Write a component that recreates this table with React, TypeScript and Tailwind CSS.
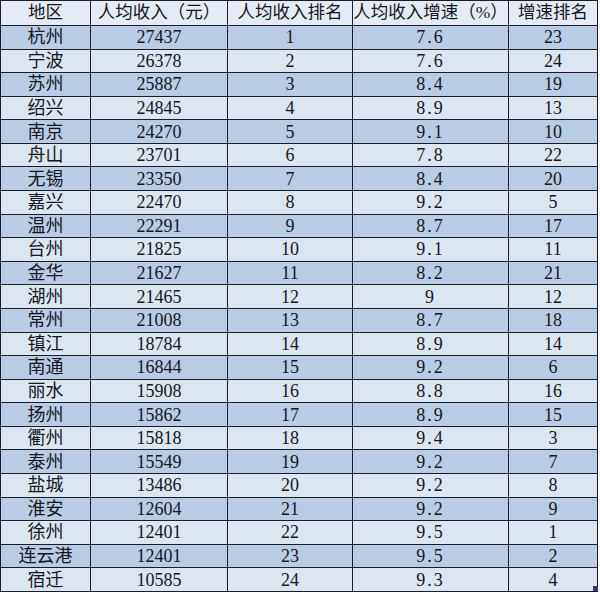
import React from 'react';

const rows: [string, string, string, string, string][] = [
  ['杭州', '27437', '1', '7.6', '23'],
  ['宁波', '26378', '2', '7.6', '24'],
  ['苏州', '25887', '3', '8.4', '19'],
  ['绍兴', '24845', '4', '8.9', '13'],
  ['南京', '24270', '5', '9.1', '10'],
  ['舟山', '23701', '6', '7.8', '22'],
  ['无锡', '23350', '7', '8.4', '20'],
  ['嘉兴', '22470', '8', '9.2', '5'],
  ['温州', '22291', '9', '8.7', '17'],
  ['台州', '21825', '10', '9.1', '11'],
  ['金华', '21627', '11', '8.2', '21'],
  ['湖州', '21465', '12', '9', '12'],
  ['常州', '21008', '13', '8.7', '18'],
  ['镇江', '18784', '14', '8.9', '14'],
  ['南通', '16844', '15', '9.2', '6'],
  ['丽水', '15908', '16', '8.8', '16'],
  ['扬州', '15862', '17', '8.9', '15'],
  ['衢州', '15818', '18', '9.4', '3'],
  ['泰州', '15549', '19', '9.2', '7'],
  ['盐城', '13486', '20', '9.2', '8'],
  ['淮安', '12604', '21', '9.2', '9'],
  ['徐州', '12401', '22', '9.5', '1'],
  ['连云港', '12401', '23', '9.5', '2'],
  ['宿迁', '10585', '24', '9.3', '4'],
];

const headers = ['地区', '人均收入（元）', '人均收入排名', '人均收入增速（%）', '增速排名'];
const widths = ['w-[90px]', 'w-[137px]', 'w-[125px]', 'w-[156px]', 'w-[89px]'];

export default function App() {
  return (
    <div className="relative w-[600px] h-[592px] bg-white">
      <table
        className="border-collapse table-fixed w-[598px] text-[#16161e] text-[18px] leading-none"
        style={{ fontFamily: '"Liberation Serif", "Noto Sans CJK SC", serif' }}
      >
        <thead>
          <tr className="h-[25px] bg-[#e4ebf4]">
            {headers.map((h, i) => (
              <th key={h} className={`${widths[i]} border border-[#1c1c28] font-normal text-center p-0 text-[17.5px]`}>
                {h}
              </th>
            ))}
          </tr>
        </thead>
        <tbody>
          {rows.map((r, idx) => (
            <tr key={r[0]} className={idx % 2 === 0 ? 'h-[23.58px] bg-[#b9cce4]' : 'h-[23.58px] bg-[#dce6f1]'}>
              {r.map((c, j) => (
                <td
                  key={j}
                  className={j === 0 ? 'border border-[#1c1c28] text-center p-0 text-[18px]' : j === 3 ? 'border border-[#1c1c28] text-center p-0 tracking-[2px]' : 'border border-[#1c1c28] text-center p-0'}
                >
                  {c}
                </td>
              ))}
            </tr>
          ))}
        </tbody>
      </table>
      <div className="absolute left-[593px] top-[586px] w-[5px] h-[5px] bg-[#2b3f70]" />
    </div>
  );
}
